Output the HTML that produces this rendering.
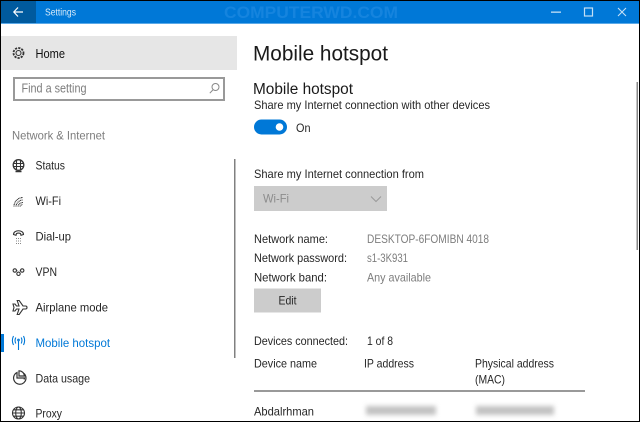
<!DOCTYPE html>
<html lang="en">
<head>
<meta charset="utf-8">
<title>Settings</title>
<style>
html,body{margin:0;padding:0;background:#fff;width:640px;height:422px;overflow:hidden}
svg{display:block;position:absolute;left:0;top:0}
text{font-family:"Liberation Sans",sans-serif;font-size:12px;fill:#262626}
.g{fill:#7d7d7d}
.i{fill:none;stroke:#333;stroke-width:1.1}
.soft{filter:blur(.3px)}
</style>
</head>
<body>
<svg width="640" height="422" viewBox="0 0 640 422" xmlns="http://www.w3.org/2000/svg">
<defs>
<filter id="b" x="-20%" y="-100%" width="140%" height="300%"><feGaussianBlur stdDeviation="2.500"/></filter>
</defs>
<rect width="640" height="422" fill="#fff"/>
<!-- title bar -->
<rect x="1" y="1" width="638" height="22" fill="#0078d7"/>
<rect x="1" y="23" width="638" height="1" fill="#5aa9e8"/>
<rect x="1" y="1" width="35" height="22" fill="#005a9e"/>
<g class="soft">
<path d="M14 12h9M18 7.500L13.800 12 18 16.500" fill="none" stroke="#fff" stroke-width="1.200"/>
<text x="45" y="15.500" textLength="31" lengthAdjust="spacingAndGlyphs" style="font-size:10px;fill:#d8ebf9">Settings</text>
<text x="224" y="18" textLength="174" lengthAdjust="spacingAndGlyphs" style="font-size:17px;font-weight:bold;fill:#1584de">COMPUTERWD.COM</text>
<rect x="551" y="11.500" width="10" height="1.300" fill="#c4e0f5"/>
<rect x="584.500" y="8" width="8" height="8" fill="none" stroke="#c4e0f5" stroke-width="1.200"/>
<path d="M618 8l8 8M626 8l-8 8" stroke="#c4e0f5" stroke-width="1.100" fill="none"/>
<!-- sidebar -->
<rect x="1" y="36" width="236" height="34" fill="#e6e6e6"/>
<g class="i"><circle cx="18.500" cy="53" r="2.500"/><circle cx="18.500" cy="53" r="5" stroke-dasharray="2.200 1.100" stroke-width="1.800"/></g>
<text x="35.500" y="58" textLength="29.500" lengthAdjust="spacingAndGlyphs" style="font-size:12.500px;fill:#111">Home</text>
<rect x="14" y="78" width="210" height="22" fill="#fff" stroke="#999" stroke-width="2"/>
<text x="21.500" y="92.500" textLength="65" lengthAdjust="spacingAndGlyphs" class="g" style="font-size:12.500px">Find a setting</text>
<g fill="none" stroke="#888"><circle cx="215.500" cy="87" r="3.500"/><path d="M212.800 90l-3 3.200"/></g>
<text x="12" y="139.500" textLength="93" lengthAdjust="spacingAndGlyphs" class="g">Network &amp; Internet</text>
<text x="35.500" y="169.500" textLength="29.500" lengthAdjust="spacingAndGlyphs">Status</text>
<text x="35.500" y="205" textLength="25.500" lengthAdjust="spacingAndGlyphs">Wi-Fi</text>
<text x="35.500" y="240.500" textLength="35.500" lengthAdjust="spacingAndGlyphs">Dial-up</text>
<text x="35.500" y="276" textLength="21.500" lengthAdjust="spacingAndGlyphs">VPN</text>
<text x="35.500" y="311.500" textLength="72.500" lengthAdjust="spacingAndGlyphs">Airplane mode</text>
<text x="35.500" y="347" textLength="74.500" lengthAdjust="spacingAndGlyphs" style="fill:#0078d7">Mobile hotspot</text>
<text x="35.500" y="382.500" textLength="54.500" lengthAdjust="spacingAndGlyphs">Data usage</text>
<text x="35.500" y="417.500" textLength="26.500" lengthAdjust="spacingAndGlyphs">Proxy</text>
<!-- sidebar icons -->
<g class="i">
<circle cx="18.500" cy="165" r="5.300" stroke-width="1.300"/><path d="M13.500 163.500h10M13.500 166.500h10M16.500 160v10M20.500 160v10"/><path d="M15.500 171.500h6" stroke-width="1.500"/>
<path d="M14 206.500a9 9 0 0 1 9-9M16 206.500a7 7 0 0 1 7-6.500M18 206.500a5 5 0 0 1 5-4M20 206.500a3 3 0 0 1 2.500-2" stroke-dasharray="1 .5"/>
<path d="M13.500 234.500c0-5 10-5 10 0l-2.500.8-.5-1.800c-1.500-.6-2.500-.6-4 0l-.5 1.800z"/>
<path d="M16 238.500h5M16 241h5M16 243.500h5" stroke="#888" stroke-dasharray="1 1"/>
<circle cx="14.800" cy="270.500" r="1.700"/><circle cx="18.500" cy="273.800" r="1.700"/><circle cx="22.200" cy="270.500" r="1.700"/><path d="M16.500 270.500h.8M19.800 270.500h.8"/>
<path d="M13 304.500h2l1.500 2h2.500l-1.800-5.500h2l3.800 5.500h2.500c2 0 2 3 0 3h-2.500l-3.800 5.500h-2l1.800-5.500h-2.500l-1.500 2h-2l1-3.500z" transform="translate(0 -.5)"/>
<path d="M24 373.500a6.200 6.200 0 1 1-7-1v5.500h7.500a6 6 0 0 1-.5 1.500" stroke-width="1.200"/><path d="M19 370.800v5.200h5.500a5.500 5.500 0 0 0-5.500-5.200z" stroke-width="1.200"/>
<circle cx="18.500" cy="413" r="6"/><ellipse cx="18.500" cy="413" rx="2.800" ry="6"/><path d="M12.500 413h12M13.500 409.800h10M13.500 416.200h10"/>
</g>
<g fill="none" stroke="#0078d7" stroke-width="1.100"><path d="M18.500 341v9"/><circle cx="18.500" cy="340" r=".8"/><path d="M15.800 337.500c-1 2-1 4 0 6M21.200 337.500c1 2 1 4 0 6M13.500 336c-1.500 3-1.500 6 0 9M23.500 336c1.500 3 1.500 6 0 9"/></g>
<rect x="1" y="334" width="3" height="18" fill="#0078d7"/>
<rect x="234" y="159" width="1.500" height="199" fill="#808080"/>
<!-- main -->
<text x="253" y="60.500" textLength="135" lengthAdjust="spacingAndGlyphs" style="font-size:21px;fill:#1a1a1a">Mobile hotspot</text>
<text x="253" y="94" textLength="100" lengthAdjust="spacingAndGlyphs" style="font-size:15.500px;fill:#1a1a1a">Mobile hotspot</text>
<text x="254" y="109" textLength="236" lengthAdjust="spacingAndGlyphs">Share my Internet connection with other devices</text>
<rect x="254" y="119.500" width="33" height="15" rx="7.500" fill="#0078d7"/>
<circle cx="279.500" cy="127" r="3.800" fill="#fff"/>
<text x="296" y="132" textLength="14.500" lengthAdjust="spacingAndGlyphs">On</text>
<text x="254" y="178" textLength="170" lengthAdjust="spacingAndGlyphs">Share my Internet connection from</text>
<rect x="254" y="186" width="133" height="25" fill="#cccccc"/>
<text x="263" y="202.500" textLength="26" lengthAdjust="spacingAndGlyphs" style="fill:#8c8c8c">Wi-Fi</text>
<path d="M371 196.500l5 5 5-5" fill="none" stroke="#999" stroke-width="1"/>
<text x="254" y="243" textLength="74" lengthAdjust="spacingAndGlyphs">Network name:</text>
<text x="367" y="243" textLength="122" lengthAdjust="spacingAndGlyphs" class="g">DESKTOP-6FOMIBN 4018</text>
<text x="254" y="262" textLength="93" lengthAdjust="spacingAndGlyphs">Network password:</text>
<text x="367" y="262" textLength="41" lengthAdjust="spacingAndGlyphs" class="g">s1-3K931</text>
<text x="254" y="281.500" textLength="73" lengthAdjust="spacingAndGlyphs">Network band:</text>
<text x="367" y="281.500" textLength="64" lengthAdjust="spacingAndGlyphs" class="g">Any available</text>
<rect x="254" y="288.500" width="67" height="24" fill="#cccccc"/>
<text x="278.500" y="304.500" textLength="18" lengthAdjust="spacingAndGlyphs">Edit</text>
<text x="254" y="345" textLength="94" lengthAdjust="spacingAndGlyphs">Devices connected:</text>
<text x="367" y="345" textLength="26" lengthAdjust="spacingAndGlyphs">1 of 8</text>
<text x="254" y="367.500" textLength="63" lengthAdjust="spacingAndGlyphs">Device name</text>
<text x="364" y="367.500" textLength="50" lengthAdjust="spacingAndGlyphs">IP address</text>
<text x="475" y="367.500" textLength="79" lengthAdjust="spacingAndGlyphs">Physical address</text>
<text x="475" y="383.500" textLength="30" lengthAdjust="spacingAndGlyphs">(MAC)</text>
<rect x="254" y="390.500" width="331" height="1" fill="#333"/>
<text x="254" y="415.500" textLength="60" lengthAdjust="spacingAndGlyphs">Abdalrhman</text>
</g>
<rect x="366" y="406" width="70" height="9" fill="#c2c2c2" filter="url(#b)"/>
<rect x="476" y="406" width="78" height="9" fill="#c2c2c2" filter="url(#b)"/>
<rect x="636.500" y="82" width="1.500" height="168" fill="#888"/>
<!-- black frame -->
<rect x="0.500" y="0.500" width="639" height="421" fill="none" stroke="#000"/>
</svg>
</body>
</html>
